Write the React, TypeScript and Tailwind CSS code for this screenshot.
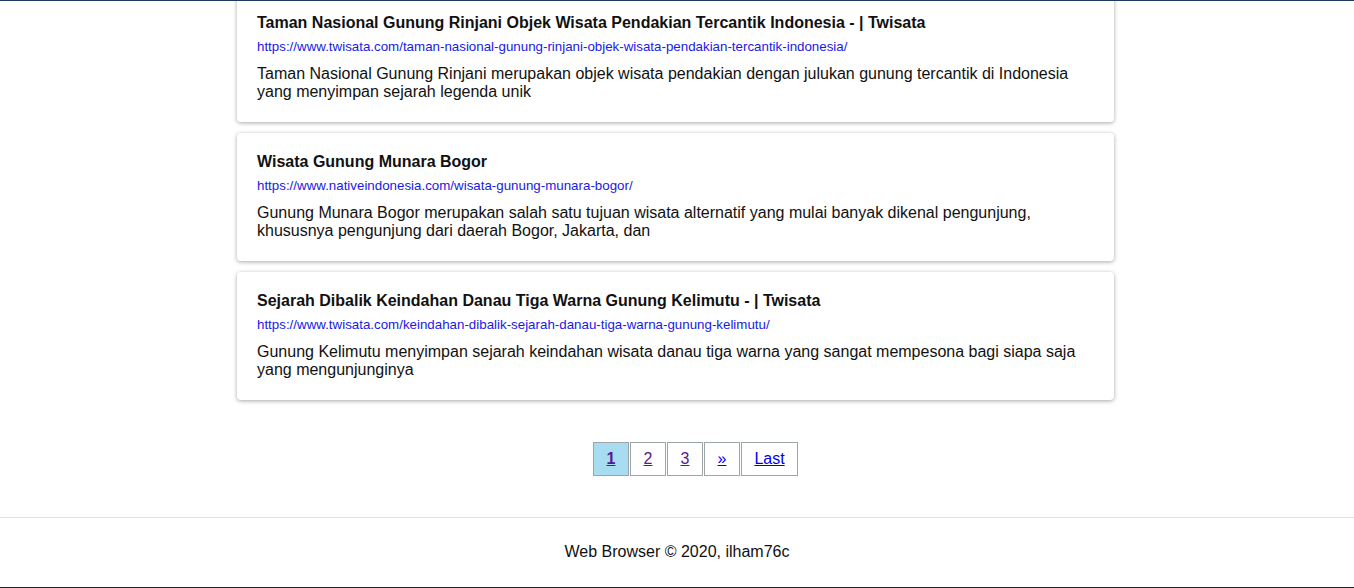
import React from "react";

const items = [
  {
    title: "Taman Nasional Gunung Rinjani Objek Wisata Pendakian Tercantik Indonesia - | Twisata",
    url: "https://www.twisata.com/taman-nasional-gunung-rinjani-objek-wisata-pendakian-tercantik-indonesia/",
    desc: "Taman Nasional Gunung Rinjani merupakan objek wisata pendakian dengan julukan gunung tercantik di Indonesia yang menyimpan sejarah legenda unik",
  },
  {
    title: "Wisata Gunung Munara Bogor",
    url: "https://www.nativeindonesia.com/wisata-gunung-munara-bogor/",
    desc: "Gunung Munara Bogor merupakan salah satu tujuan wisata alternatif yang mulai banyak dikenal pengunjung, khususnya pengunjung dari daerah Bogor, Jakarta, dan",
  },
  {
    title: "Sejarah Dibalik Keindahan Danau Tiga Warna Gunung Kelimutu - | Twisata",
    url: "https://www.twisata.com/keindahan-dibalik-sejarah-danau-tiga-warna-gunung-kelimutu/",
    desc: "Gunung Kelimutu menyimpan sejarah keindahan wisata danau tiga warna yang sangat mempesona bagi siapa saja yang mengunjunginya",
  },
];

const pages = [
  { t: "1", active: true, visited: true, w: "w-[36px]" },
  { t: "2", visited: true, w: "w-[36px]" },
  { t: "3", visited: true, w: "w-[36px]" },
  { t: "»", w: "w-[36px]" },
  { t: "Last", w: "w-[57px]" },
];

export default function App() {
  return (
    <div className="relative min-h-[588px] bg-white text-black font-['Liberation_Sans',Arial,sans-serif]">
      <div className="fixed top-0 left-0 right-0 h-px bg-[#1c3a5e] z-10" />
      <main className="w-[877px] ml-[237px] -mt-[6px] flex flex-col gap-[11px]">
        {items.map((it) => (
          <div
            key={it.url}
            className="h-[128px] bg-white rounded-[4px] shadow-[0_1px_4px_rgba(0,0,0,0.35)] px-[20px] pt-[20px]"
          >
            <div className="text-[16px] leading-[18px] font-bold text-[#111]">{it.title}</div>
            <a href="#" className="block mt-[7px] text-[13.33px] leading-[16px] text-[#1a1ae6]">
              {it.url}
            </a>
            <p className="mt-[10px] text-[16px] leading-[18px] text-[#111]">{it.desc}</p>
          </div>
        ))}
      </main>
      <nav className="flex justify-center gap-px mt-[42px] pl-[37px]">
        {pages.map((p) => (
          <a
            key={p.t}
            href="#"
            className={`${p.w} text-center border border-[#9ea5a8] py-[7px] text-[16px] leading-[18px] underline ${
              p.active ? "bg-[#a8dcf0] font-bold" : "bg-white"
            } ${p.visited ? "text-[#551a8b]" : "text-[#0000ee]"}`}
          >
            {p.t}
          </a>
        ))}
      </nav>
      <footer className="mt-[41px] border-t border-[#e2e2e2] h-[71px] pb-[2px] flex items-center justify-center text-[16px] leading-[18px] text-[#111] border-b border-b-[#222]">
        Web Browser © 2020, ilham76c
      </footer>
    </div>
  );
}
